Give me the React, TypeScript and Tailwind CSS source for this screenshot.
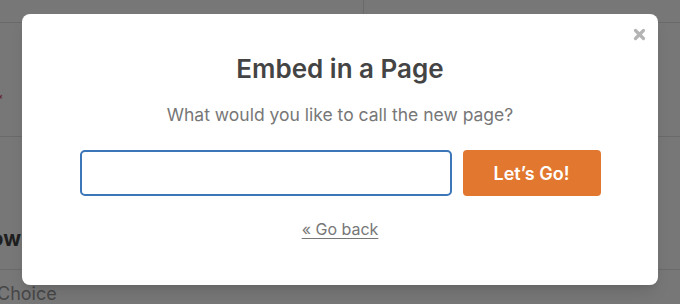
import React from "react";

export default function App() {
  const font = { fontFamily: 'Inter, "Noto Sans", sans-serif' };
  return (
    <div className="relative w-[680px] h-[304px] overflow-hidden bg-white" style={font}>
      {/* underlying page */}
      <div className="flex flex-col">
        <div className="h-[23px] border-b border-[#e4e4e4] flex">
          <div className="w-[364px] h-full border-r border-[#e4e4e4]" />
        </div>
        <div className="h-[114px] border-b border-[#e4e4e4] flex flex-col">
          <div className="mt-[70px] ml-[-4px] text-[14px] leading-[14px] text-[#d63638]">*</div>
        </div>
        <div className="h-[133px] border-b border-[#e4e4e4] flex flex-col">
          <div className="mt-[88px] w-[21px] flex justify-end overflow-hidden">
            <span className="shrink-0 whitespace-nowrap text-[21px] leading-[28px] font-bold text-[#444]">Flow</span>
          </div>
        </div>
        <div className="ml-[-3px] mt-[12px] text-[18px] leading-[24px] text-[#999]">Choice</div>
      </div>

      {/* overlay */}
      <div className="absolute inset-0 bg-black/[0.535]" />

      {/* modal */}
      <div className="absolute left-[22px] top-[14px] w-[636px] h-[271px] bg-white rounded-[8px] shadow-lg flex flex-col items-center pt-[39px]">
        <button className="absolute right-[12px] top-[14px] w-[13px] h-[13px] flex items-center justify-center">
          <svg width="13" height="13" viewBox="0 0 13 13">
            <path d="M2.5 2.5 L10.5 10.5 M10.5 2.5 L2.5 10.5" stroke="#b4b4b4" strokeWidth="3.2" strokeLinecap="round" />
          </svg>
        </button>
        <h2 className="text-[26px] leading-[32px] font-semibold text-[#444]">Embed in a Page</h2>
        <p className="mt-[18px] text-[17.5px] leading-[24px] text-[#777]">What would you like to call the new page?</p>
        <div className="mt-[23px] flex gap-[11px]">
          <input
            type="text"
            className="w-[372px] h-[46px] rounded-[5px] border-2 border-[#3b76b8] outline-none px-3 text-[16px]"
          />
          <button className="w-[138px] h-[46px] rounded-[4px] bg-[#e27730] text-white text-[18px] font-semibold">
            Let’s Go!
          </button>
        </div>
        <a href="#" className="mt-[21px] text-[16px] leading-[24px] text-[#777] underline underline-offset-[3px]">
          « Go back
        </a>
      </div>
    </div>
  );
}
